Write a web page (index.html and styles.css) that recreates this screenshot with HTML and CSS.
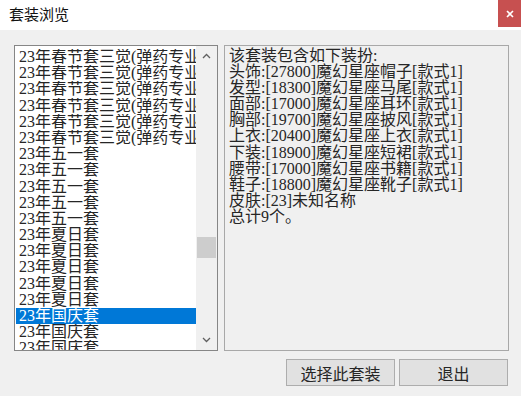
FILE: index.html
```html
<!DOCTYPE html>
<html lang="zh-CN">
<head>
    <meta charset="UTF-8">
    <meta name="viewport" content="width=device-width, initial-scale=1.0">
    <title>套装浏览</title>
    <link rel="stylesheet" href="styles.css">
</head>
<body>
    <div class="window">
        <!-- Title bar -->
        <div class="titlebar">
            <span class="title">套装浏览</span>
            <button class="close" type="button" aria-label="关闭">
                <svg width="8" height="8" viewBox="0 0 8 8">
                    <path d="M1 1 L7 7 M7 1 L1 7" stroke="#fff" stroke-width="1.6" fill="none"/>
                </svg>
            </button>
        </div>

        <div class="content">
            <div class="panes">
                <!-- Suit list -->
                <div class="listbox">
                    <ul class="items">
                        <li>23年春节套三觉(弹药专业</li>
                        <li>23年春节套三觉(弹药专业</li>
                        <li>23年春节套三觉(弹药专业</li>
                        <li>23年春节套三觉(弹药专业</li>
                        <li>23年春节套三觉(弹药专业</li>
                        <li>23年春节套三觉(弹药专业</li>
                        <li>23年五一套</li>
                        <li>23年五一套</li>
                        <li>23年五一套</li>
                        <li>23年五一套</li>
                        <li>23年五一套</li>
                        <li>23年夏日套</li>
                        <li>23年夏日套</li>
                        <li>23年夏日套</li>
                        <li>23年夏日套</li>
                        <li>23年夏日套</li>
                        <li class="selected">23年国庆套</li>
                        <li>23年国庆套</li>
                        <li>23年国庆套</li>
                    </ul>
                    <div class="scrollbar">
                        <div class="arrow">
                            <svg width="9" height="6" viewBox="0 0 9 6"><path d="M1 5 L4.5 1.5 L8 5" stroke="#606060" stroke-width="1.3" fill="none"/></svg>
                        </div>
                        <div class="track"><div class="thumb"></div></div>
                        <div class="arrow">
                            <svg width="9" height="6" viewBox="0 0 9 6"><path d="M1 1 L4.5 4.5 L8 1" stroke="#606060" stroke-width="1.3" fill="none"/></svg>
                        </div>
                    </div>
                </div>

                <!-- Suit contents -->
                <div class="details">
                    <div>该套装包含如下装扮:</div>
                    <div>头饰:[27800]魔幻星座帽子[款式1]</div>
                    <div>发型:[18300]魔幻星座马尾[款式1]</div>
                    <div>面部:[17000]魔幻星座耳环[款式1]</div>
                    <div>胸部:[19700]魔幻星座披风[款式1]</div>
                    <div>上衣:[20400]魔幻星座上衣[款式1]</div>
                    <div>下装:[18900]魔幻星座短裙[款式1]</div>
                    <div>腰带:[17000]魔幻星座书籍[款式1]</div>
                    <div>鞋子:[18800]魔幻星座靴子[款式1]</div>
                    <div>皮肤:[23]未知名称</div>
                    <div>总计9个。</div>
                </div>
            </div>

            <div class="actions">
                <button type="button">选择此套装</button>
                <button type="button">退出</button>
            </div>
        </div>
    </div>
</body>
</html>
```

FILE: styles.css
```css
body {
    margin: 0;
    background-color: #f0f0f0;
}
.window {
    width: 521px;
    height: 396px;
    display: flex;
    flex-direction: column;
    background-color: #f0f0f0;
    overflow: hidden;
}
.titlebar {
    height: 30px;
    background-color: #fff;
    display: flex;
    justify-content: space-between;
    align-items: flex-start;
    flex-shrink: 0;
}
.title {
    margin: 5px 0 0 9px;
    font-family: "Noto Sans CJK SC", sans-serif;
    font-size: 15px;
    line-height: 18px;
    color: #111;
}
.close {
    width: 23px;
    height: 27px;
    border: none;
    padding: 0;
    background-color: #c75050;
    display: flex;
    align-items: center;
    justify-content: center;
}
.content {
    padding: 15px 12px 0 14px;
}
.panes {
    display: flex;
    gap: 6px;
    height: 306px;
}
.listbox {
    width: 204px;
    box-sizing: border-box;
    border: 1px solid #868686;
    background-color: #fff;
    display: flex;
}
.items {
    flex: 1;
    list-style: none;
    margin: 0;
    padding: 3px 0 0 1px;
    overflow: hidden;
    font-family: "Liberation Serif", "Noto Sans CJK SC", serif;
    font-size: 16px;
    line-height: 16.2px;
    color: #262626;
}
.items li {
    padding-left: 3px;
    height: 16.2px;
    white-space: nowrap;
    overflow: hidden;
}
.items li.selected {
    background-color: #0078d7;
    color: #fff;
}
.scrollbar {
    width: 21px;
    display: flex;
    flex-direction: column;
    background-color: #f0f0f0;
}
.arrow {
    height: 20px;
    display: flex;
    align-items: center;
    justify-content: center;
}
.track {
    flex: 1;
}
.thumb {
    margin: 171px 1px 0 1px;
    height: 21px;
    background-color: #cdcdcd;
}
.details {
    width: 285px;
    box-sizing: border-box;
    border: 1px solid #a8a8a8;
    padding: 2px 4px;
    font-family: "Liberation Serif", "Noto Sans CJK SC", serif;
    font-size: 16px;
    line-height: 16.1px;
    color: #262626;
    white-space: nowrap;
}
.actions {
    display: flex;
    justify-content: flex-end;
    gap: 4px;
    margin-top: 8px;
    padding-right: 1px;
}
.actions button {
    width: 109px;
    height: 27px;
    border: 1px solid #adadad;
    background-color: #e1e1e1;
    font-family: "Noto Sans CJK SC", sans-serif;
    font-size: 16px;
    color: #262626;
    padding: 0;
}
```
